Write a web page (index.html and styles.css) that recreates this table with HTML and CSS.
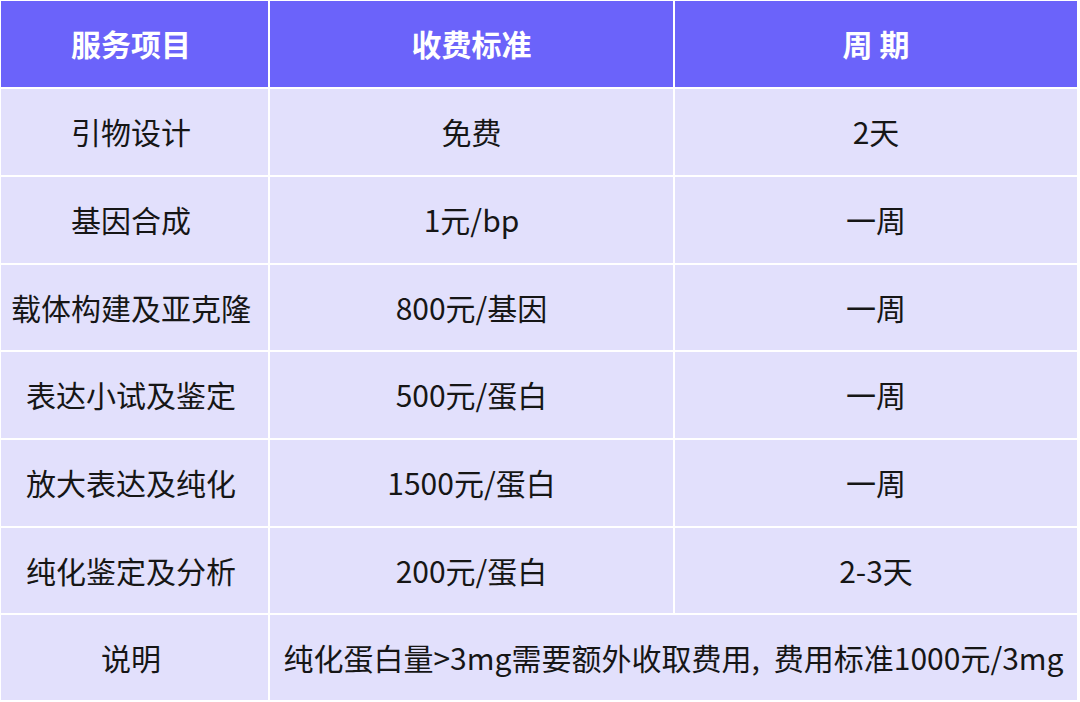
FILE: index.html
```html
<!DOCTYPE html>
<html lang="zh">
<head>
<meta charset="utf-8">
<link rel="stylesheet" href="styles.css">
</head>
<body>
<div class="table">
  <div class="cell head first">服务项目</div>
  <div class="cell head">收费标准</div>
  <div class="cell head">周 期</div>

  <div class="cell first">引物设计</div>
  <div class="cell">免费</div>
  <div class="cell">2天</div>

  <div class="cell first">基因合成</div>
  <div class="cell">1元/bp</div>
  <div class="cell">一周</div>

  <div class="cell first">载体构建及亚克隆</div>
  <div class="cell">800元/基因</div>
  <div class="cell">一周</div>

  <div class="cell first">表达小试及鉴定</div>
  <div class="cell">500元/蛋白</div>
  <div class="cell">一周</div>

  <div class="cell first">放大表达及纯化</div>
  <div class="cell">1500元/蛋白</div>
  <div class="cell">一周</div>

  <div class="cell first">纯化鉴定及分析</div>
  <div class="cell">200元/蛋白</div>
  <div class="cell">2-3天</div>

  <div class="cell first">说明</div>
  <div class="cell span2"><span>纯化蛋白量&gt;3mg需要额外收取费用<span class="comma">,</span>费用标准1000元/3mg</span></div>
</div>
</body>
</html>
```

FILE: styles.css
```css
html, body {
  margin: 0;
  padding: 0;
  background: #ffffff;
}

body {
  width: 1080px;
  height: 702px;
  overflow: hidden;
  font-family: "Noto Sans CJK SC", "Noto Sans", sans-serif;
}

.table {
  display: grid;
  grid-template-columns: 267px 403px 402px;
  grid-template-rows: 86px 86px 86px 85px 86px 86px 85px 85px;
  gap: 2px;
  padding: 1px 0 0 1px;
  width: 1078px;
  box-sizing: content-box;
}

.cell {
  display: flex;
  align-items: center;
  justify-content: center;
  padding-bottom: 2px;
  background: #e2e0fc;
  color: #161616;
  font-size: 30px;
  white-space: nowrap;
}

.first {
  padding-right: 7px;
}

.head {
  background: #6b63fa;
  color: #ffffff;
  font-weight: 700;
}

.span2 {
  grid-column: span 2;
}

.comma {
  margin-right: 14px;
}
```
